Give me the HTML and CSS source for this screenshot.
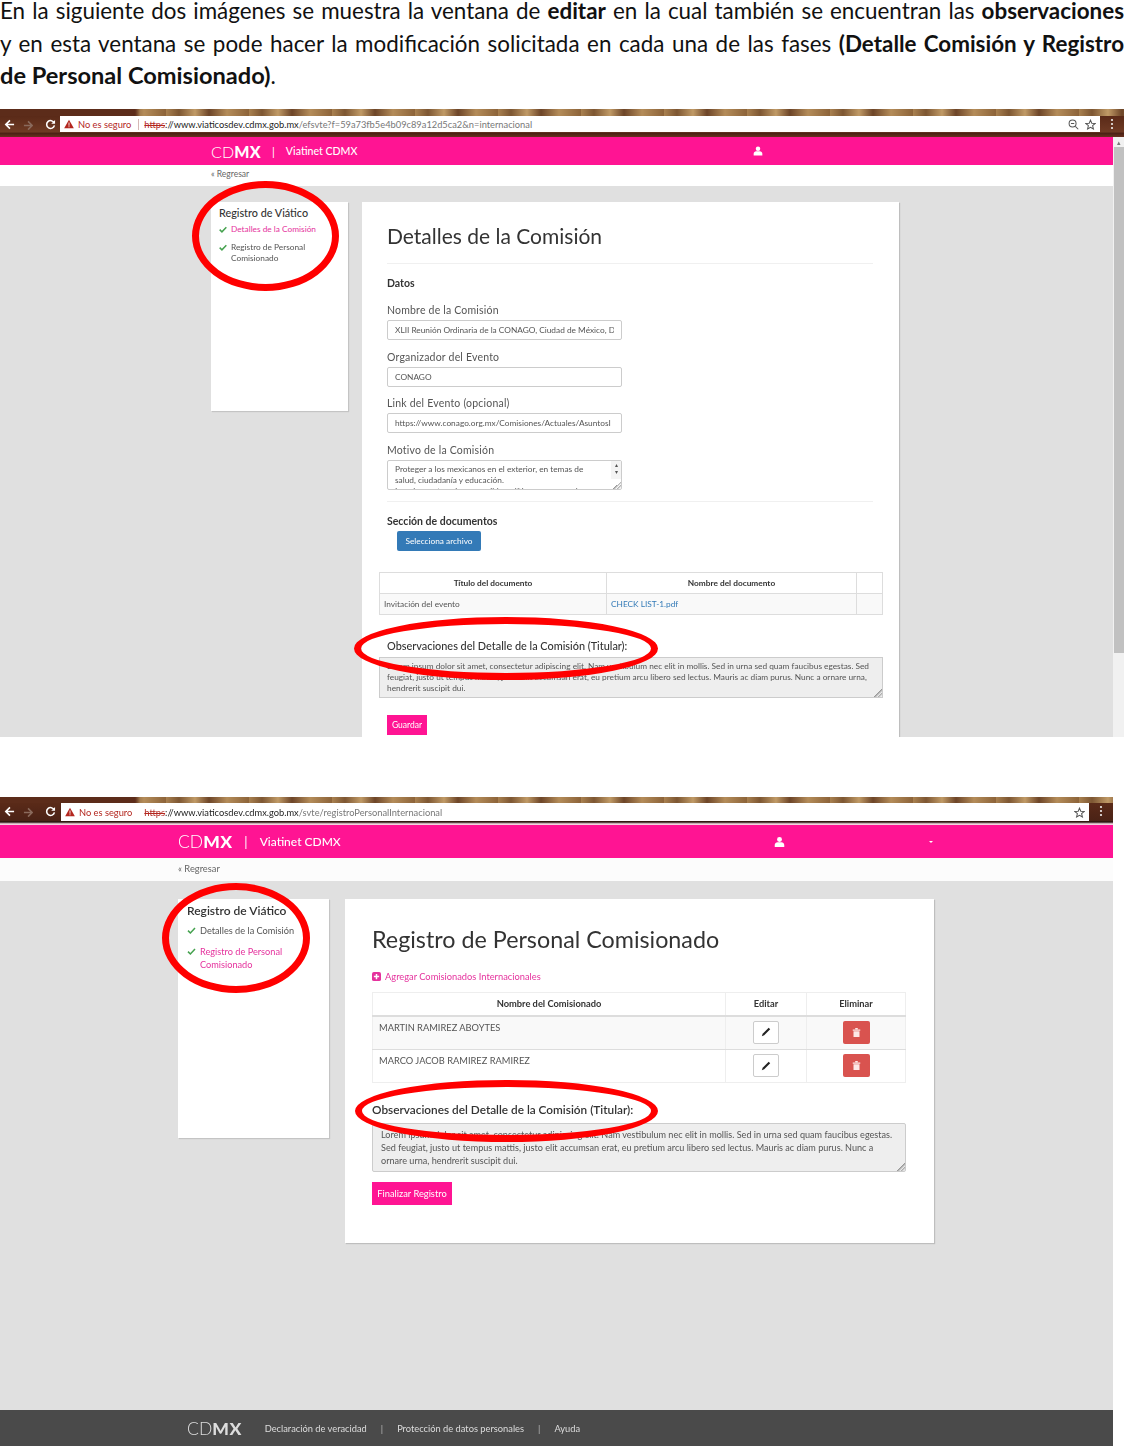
FILE: index.html
```html
<!DOCTYPE html>
<html lang="es">

<head>
    <meta charset="UTF-8">
    <title>Ventana de editar</title>
    <link rel="stylesheet" href="styles.css">
</head>

<body>
    <svg class="icon-defs" width="0" height="0">
        <symbol id="i-back" viewBox="0 0 12 12"><path d="M11 6H2.5M6.5 1.5 2 6l4.500 4.500" fill="none" stroke="currentColor" stroke-width="1.800"/></symbol>
        <symbol id="i-reload" viewBox="0 0 12 12"><path d="M10 4.200A4.300 4.300 0 1 0 10.300 7" fill="none" stroke="currentColor" stroke-width="1.700"/><path d="M11 1v4.200H6.800z" fill="currentColor"/></symbol>
        <symbol id="i-warn" viewBox="0 0 12 12"><path d="M6 .8 11.800 11H.2z" fill="currentColor"/><path d="M5.500 4.200h1v3.800h-1zM5.500 8.800h1v1h-1z" fill="#fff"/></symbol>
        <symbol id="i-zoom" viewBox="0 0 12 12"><circle cx="5" cy="5" r="3.800" fill="none" stroke="currentColor" stroke-width="1.100"/><path d="M3.200 5h3.600M8 8l3.200 3.200" fill="none" stroke="currentColor" stroke-width="1.100"/></symbol>
        <symbol id="i-star" viewBox="0 0 12 12"><path d="M6 1.200 7.400 4.600l3.700.3-2.800 2.400.9 3.600L6 9l-3.200 1.900.9-3.600L.9 4.900l3.700-.3z" fill="none" stroke="currentColor" stroke-width="1.100"/></symbol>
        <symbol id="i-kebab" viewBox="0 0 4 12"><circle cx="2" cy="2" r="1.100" fill="currentColor"/><circle cx="2" cy="6" r="1.100" fill="currentColor"/><circle cx="2" cy="10" r="1.100" fill="currentColor"/></symbol>
        <symbol id="i-user" viewBox="0 0 12 12"><circle cx="6" cy="3.300" r="2.700" fill="currentColor"/><path d="M.8 11.500V9.400c0-2 1.500-3.200 3-3.200h4.400c1.500 0 3 1.200 3 3.200v2.100z" fill="currentColor"/></symbol>
        <symbol id="i-check" viewBox="0 0 12 10"><path d="M1 5.200 4.400 8.500 11 1.500" fill="none" stroke="currentColor" stroke-width="2.200"/></symbol>
        <symbol id="i-pencil" viewBox="0 0 12 12"><path d="M9.200 1 11 2.800 3.800 10 1 11l1-2.800z" fill="currentColor"/></symbol>
        <symbol id="i-trash" viewBox="0 0 12 14"><path d="M1 3h10v1.500H1zM4.300 1h3.400v1.500H4.300zM2 5.200h8V13H2z" fill="currentColor"/></symbol>
        <symbol id="i-plus" viewBox="0 0 12 12"><rect width="12" height="12" rx="2.500" fill="currentColor"/><path d="M5 2.500h2V5h2.500v2H7v2.500H5V7H2.500V5H5z" fill="#fff"/></symbol>
    </svg>

    <p class="intro">
        <span class="line">En la siguiente dos imágenes se muestra la ventana de <b>editar</b> en la cual también se encuentran las <b>observaciones</b></span>
        <span class="line">y en esta ventana se pode hacer la modificación solicitada en cada una de las fases <b>(Detalle Comisión y Registro</b></span>
        <span class="line line-end"><b>de Personal Comisionado)</b>.</span>
    </p>

    <!-- primera captura -->
    <section class="shot shot-one">
        <div class="shot-body">
            <div class="wood"></div>
            <div class="toolbar">
                <svg class="nav-icon"><use href="#i-back" /></svg>
                <svg class="nav-icon nav-off"><use href="#i-back" transform="rotate(180 6 6)" /></svg>
                <svg class="nav-icon"><use href="#i-reload" /></svg>
                <div class="urlbar">
                    <svg class="warn"><use href="#i-warn" /></svg>
                    <span class="not-safe">No es seguro</span>
                    <span class="url"><s>https</s>://www.viaticosdev.cdmx.gob.mx<span class="url-rest">/efsvte?f=59a73fb5e4b09c89a12d5ca2&amp;n=internacional</span></span>
                    <svg class="url-icon"><use href="#i-zoom" /></svg>
                    <svg class="url-icon"><use href="#i-star" /></svg>
                </div>
                <svg class="kebab"><use href="#i-kebab" /></svg>
            </div>
            <div class="window">
                <div class="app">
                    <header class="topbar">
                        <span class="logo">CD<b>MX</b></span>
                        <span class="sep">|</span>
                        <span class="app-name">Viatinet CDMX</span>
                        <svg class="user"><use href="#i-user" /></svg>
                    </header>
                    <div class="backbar">« Regresar</div>
                    <div class="workspace">
                        <aside class="steps">
                            <h3>Registro de Viático</h3>
                            <div class="step step-on"><svg class="check"><use href="#i-check" /></svg><span>Detalles de la Comisión</span></div>
                            <div class="step"><svg class="check"><use href="#i-check" /></svg><span>Registro de Personal Comisionado</span></div>
                        </aside>
                        <main class="card">
                            <h2>Detalles de la Comisión</h2>
                            <hr class="rule-title">
                            <h4 class="datos">Datos</h4>
                            <div class="fields">
                                <div class="field">
                                    <label>Nombre de la Comisión</label>
                                    <div class="input"><span class="input-text">XLII Reunión Ordinaria de la CONAGO, Ciudad de México, D</span></div>
                                </div>
                                <div class="field">
                                    <label>Organizador del Evento</label>
                                    <div class="input"><span class="input-text">CONAGO</span></div>
                                </div>
                                <div class="field">
                                    <label>Link del Evento (opcional)</label>
                                    <div class="input"><span class="input-text">https://www.conago.org.mx/Comisiones/Actuales/AsuntosI</span></div>
                                </div>
                                <div class="field">
                                    <label>Motivo de la Comisión</label>
                                    <div class="input input-area">
                                        <div class="area-text">Proteger a los mexicanos en el exterior, en temas de salud, ciudadanía y educación.<br>Impulsar entre y hacer posible políticas para que el</div>
                                        <div class="area-scroll"><span>▴</span><span>▾</span></div>
                                    </div>
                                </div>
                            </div>
                            <hr class="rule-docs">
                            <h4 class="docs">Sección de documentos</h4>
                            <button class="btn-file">Selecciona archivo</button>
                            <table class="grid docs-grid">
                                <thead>
                                    <tr><th class="col-title">Título del documento</th><th class="col-file">Nombre del documento</th><th></th></tr>
                                </thead>
                                <tbody>
                                    <tr><td>Invitación del evento</td><td><a>CHECK LIST-1.pdf</a></td><td></td></tr>
                                </tbody>
                            </table>
                            <h4 class="obs-label">Observaciones del Detalle de la Comisión (Titular):</h4>
                            <div class="obs-box">Lorem ipsum dolor sit amet, consectetur adipiscing elit. Nam vestibulum nec elit in mollis. Sed in urna sed quam faucibus egestas. Sed feugiat, justo ut tempus mattis, justo elit accumsan erat, eu pretium arcu libero sed lectus. Mauris ac diam purus. Nunc a ornare urna, hendrerit suscipit dui.</div>
                            <button class="btn-pink">Guardar</button>
                        </main>
                    </div>
                </div>
                <div class="scrollbar"><span class="scroll-up">▴</span><span class="scroll-thumb"></span></div>
            </div>
        </div>
        <div class="ring ring-steps"></div>
        <div class="ring ring-obs"></div>
    </section>

    <!-- segunda captura -->
    <section class="shot shot-two">
        <div class="shot-body">
            <div class="wood"></div>
            <div class="toolbar">
                <svg class="nav-icon"><use href="#i-back" /></svg>
                <svg class="nav-icon nav-off"><use href="#i-back" transform="rotate(180 6 6)" /></svg>
                <svg class="nav-icon"><use href="#i-reload" /></svg>
                <div class="urlbar">
                    <svg class="warn"><use href="#i-warn" /></svg>
                    <span class="not-safe">No es seguro</span>
                    <span class="url"><s>https</s>://www.viaticosdev.cdmx.gob.mx<span class="url-rest">/svte/registroPersonalInternacional</span></span>
                    <svg class="url-icon"><use href="#i-star" /></svg>
                </div>
                <svg class="kebab"><use href="#i-kebab" /></svg>
            </div>
            <div class="app">
                <header class="topbar">
                    <span class="logo">CD<b>MX</b></span>
                    <span class="sep">|</span>
                    <span class="app-name">Viatinet CDMX</span>
                    <svg class="user"><use href="#i-user" /></svg>
                    <span class="caret"></span>
                </header>
                <div class="backbar">« Regresar</div>
                <div class="workspace">
                    <aside class="steps">
                        <h3>Registro de Viático</h3>
                        <div class="step"><svg class="check"><use href="#i-check" /></svg><span>Detalles de la Comisión</span></div>
                        <div class="step step-on"><svg class="check"><use href="#i-check" /></svg><span>Registro de Personal Comisionado</span></div>
                    </aside>
                    <main class="card">
                        <h2>Registro de Personal Comisionado</h2>
                        <a class="add-link"><svg class="plus"><use href="#i-plus" /></svg>Agregar Comisionados Internacionales</a>
                        <table class="grid people-grid">
                            <thead>
                                <tr><th>Nombre del Comisionado</th><th class="col-edit">Editar</th><th class="col-del">Eliminar</th></tr>
                            </thead>
                            <tbody>
                                <tr>
                                    <td>MARTIN RAMIREZ ABOYTES</td>
                                    <td class="cell-btn"><span class="btn-edit"><svg><use href="#i-pencil" /></svg></span></td>
                                    <td class="cell-btn"><span class="btn-del"><svg><use href="#i-trash" /></svg></span></td>
                                </tr>
                                <tr>
                                    <td>MARCO JACOB RAMIREZ RAMIREZ</td>
                                    <td class="cell-btn"><span class="btn-edit"><svg><use href="#i-pencil" /></svg></span></td>
                                    <td class="cell-btn"><span class="btn-del"><svg><use href="#i-trash" /></svg></span></td>
                                </tr>
                            </tbody>
                        </table>
                        <h4 class="obs-label">Observaciones del Detalle de la Comisión (Titular):</h4>
                        <div class="obs-box">Lorem ipsum dolor sit amet, consectetur adipiscing elit. Nam vestibulum nec elit in mollis. Sed in urna sed quam faucibus egestas. Sed feugiat, justo ut tempus mattis, justo elit accumsan erat, eu pretium arcu libero sed lectus. Mauris ac diam purus. Nunc a ornare urna, hendrerit suscipit dui.</div>
                        <button class="btn-pink">Finalizar Registro</button>
                    </main>
                </div>
                <footer class="footer">
                    <span class="logo">CD<b>MX</b></span>
                    <a>Declaración de veracidad</a>
                    <span class="foot-sep">|</span>
                    <a>Protección de datos personales</a>
                    <span class="foot-sep">|</span>
                    <a>Ayuda</a>
                </footer>
            </div>
        </div>
        <div class="ring ring-steps"></div>
        <div class="ring ring-obs"></div>
    </section>
</body>

</html>
```

FILE: styles.css
```css
html,
body {
    margin: 0;
    padding: 0;
    background: #fff;
}

body {
    width: 1124px;
    height: 1446px;
    overflow: hidden;
    font-family: Lato, "Open Sans", sans-serif;
    color: #333;
}

.icon-defs {
    display: block;
    height: 0;
}

.intro {
    margin: 0;
    height: 109px;
    font-size: 22.400px;
    line-height: 21px;
    color: #111;
}

.line {
    display: block;
    margin-bottom: 11.500px;
    white-space: nowrap;
    text-align: justify;
    text-align-last: justify;
}

.line-end {
    text-align-last: left;
}

.line-end b {
    font-size: 23.600px;
}

.shot {
    position: relative;
    overflow: hidden;
}

.shot-one {
    height: 628px;
    width: 1124px;
}

.shot-two {
    margin-top: 60px;
    height: 649px;
    width: 1113px;
}

.shot-body {
    height: 100%;
    display: flex;
    flex-direction: column;
}

.shot-one .shot-body {
    filter: blur(0.25px);
}

.shot-two .shot-body {
    filter: blur(0.7px);
}

/* barra del navegador */
.wood {
    height: 7px;
    flex: none;
    background:
        linear-gradient(90deg, #5c2c1a 0, #5c2c1a 135px, transparent 140px),
        repeating-linear-gradient(90deg, #a98150 0, #7d5632 13px, #c09a66 29px, #6d4528 43px, #b48c59 61px, #8c6339 83px);
}

.shot-two .wood {
    height: 6px;
}

.toolbar {
    height: 21px;
    flex: none;
    display: flex;
    align-items: flex-start;
    background: linear-gradient(#5a2a18 0, #6e3a24 76%, #4a2014 82%, #67311f 100%);
    color: #fff;
}

.shot-two .toolbar {
    height: 22px;
    background: linear-gradient(#5a2a18 0, #4a2216 82%, #1d0d08 86%, #f2d5de 95%);
}

.nav-icon {
    width: 11px;
    height: 11px;
    margin: 3px 8px 0 4px;
    flex: none;
}

.nav-off {
    color: #8a6a5c;
    margin-left: -1px;
}

.urlbar {
    width: 1040px;
    height: 16px;
    margin-left: -4px;
    padding: 0 4px;
    box-sizing: border-box;
    display: flex;
    align-items: center;
    background: #fff;
    font-size: 9.300px;
    white-space: nowrap;
}

.shot-two .urlbar {
    width: 1028px;
    height: 18px;
    margin-left: -3px;
}

.warn {
    width: 10px;
    height: 10px;
    margin-right: 4px;
    color: #b3261e;
    flex: none;
}

.not-safe {
    color: #b3261e;
    padding-right: 7px;
    margin-right: 5px;
    border-right: 1px solid #d5b7b5;
}

.shot-two .not-safe {
    border-right-color: transparent;
    padding-right: 6px;
}

.url {
    flex: 1;
    color: #222;
}

.url s {
    color: #b3261e;
}

.url-rest {
    color: #777;
}

.url-icon {
    width: 11px;
    height: 11px;
    margin-left: 6px;
    color: #555;
    flex: none;
}

.kebab {
    width: 4px;
    height: 12px;
    margin: 2px 0 0 10px;
    color: #eee;
    flex: none;
}

/* aplicacion */
.window {
    flex: 1;
    display: flex;
    min-height: 0;
    margin-top: 0;
}

.app {
    flex: 1;
    min-width: 0;
    min-height: 0;
    display: flex;
    flex-direction: column;
    background: #e0e0e0;
}

.scrollbar {
    width: 11px;
    flex: none;
    display: flex;
    flex-direction: column;
    background: #f1f1f1;
}

.scroll-up {
    height: 10px;
    font-size: 7px;
    line-height: 10px;
    text-align: center;
    color: #777;
}

.scroll-thumb {
    height: 506px;
    margin-left: 1px;
    background: #c1c1c1;
}

.topbar {
    height: 28px;
    flex: none;
    display: flex;
    align-items: center;
    padding-left: 211px;
    background: #ff1493;
    color: #fff;
}

.shot-two .topbar {
    height: 33px;
    padding-left: 178px;
}

.logo {
    font-size: 16px;
    font-weight: 300;
    letter-spacing: 0.1px;
}

.logo b {
    font-weight: 900;
    letter-spacing: 0.4px;
}

.shot-two .logo {
    font-size: 17.400px;
}

.sep {
    font-size: 11px;
    margin: 0 11px 0 11px;
}

.shot-two .sep {
    font-size: 13px;
    margin: 0 12px 0 12px;
}

.app-name {
    font-size: 10.600px;
    font-weight: 500;
}

.shot-two .app-name {
    font-size: 12px;
}

.user {
    width: 10px;
    height: 10px;
    margin-left: 396px;
    flex: none;
}

.shot-two .user {
    width: 11px;
    height: 12px;
    margin-left: 433px;
}

.caret {
    width: 0;
    height: 0;
    margin-left: 144px;
    border: 2px solid transparent;
    border-top-color: #fff;
    border-bottom: 0;
}

.backbar {
    height: 21px;
    flex: none;
    padding-left: 211px;
    box-sizing: border-box;
    background: #fff;
    font-size: 8.500px;
    line-height: 18px;
    color: #666;
}

.shot-two .backbar {
    height: 23px;
    padding-left: 178px;
    font-size: 9.300px;
    line-height: 21px;
    background: #fcfcfc;
}

.workspace {
    flex: 1;
    min-height: 0;
    display: flex;
    align-items: flex-start;
    gap: 14px;
    padding: 16px 0 0 211px;
}

.shot-two .workspace {
    gap: 16px;
    padding: 18px 0 0 178px;
}

.steps {
    width: 137px;
    height: 209px;
    flex: none;
    box-sizing: border-box;
    padding: 4px 8px;
    background: #fff;
    box-shadow: 1px 1px 1px rgba(0, 0, 0, 0.12);
}

.shot-two .steps {
    width: 151px;
    height: 239px;
    padding: 5px 9px;
}

.steps h3 {
    margin: 0 0 5px;
    font-size: 10.800px;
    line-height: 13px;
    font-weight: 500;
    color: #333;
}

.shot-two .steps h3 {
    margin-bottom: 6px;
    font-size: 12px;
    line-height: 14px;
    font-weight: 600;
}

.step {
    display: flex;
    gap: 4px;
    margin-bottom: 7px;
    font-size: 8.300px;
    line-height: 11px;
    color: #555;
}

.shot-two .step {
    gap: 4px;
    margin-bottom: 8px;
    font-size: 9.200px;
    line-height: 13px;
}

.step-on {
    color: #e5329d;
}

.check {
    width: 8px;
    height: 7px;
    margin-top: 2px;
    flex: none;
    color: #45a24f;
}

.shot-two .check {
    width: 9px;
    height: 7px;
    margin-top: 3px;
}

.card {
    width: 537px;
    flex: none;
    box-sizing: border-box;
    padding: 23px 26px 40px 25px;
    background: #fff;
    box-shadow: 1px 1px 1px rgba(0, 0, 0, 0.15);
}

.shot-two .card {
    width: 589px;
    padding: 26px 28px 38px 27px;
}

.card h2 {
    margin: 0;
    font-size: 21px;
    line-height: 22px;
    font-weight: 400;
    color: #333;
}

.shot-two .card h2 {
    font-size: 23.300px;
    line-height: 28px;
}

.rule-title,
.rule-docs {
    margin: 16px 0 0;
    border: 0;
    border-top: 1px solid #f0f0f0;
}

.card h4 {
    font-size: 10.500px;
    line-height: 14px;
    font-weight: 700;
    color: #333;
}

.datos {
    margin: 12px 0 0;
}

.fields {
    margin-top: 13px;
    display: flex;
    flex-direction: column;
    gap: 9.500px;
}

.field label {
    display: block;
    margin-bottom: 3px;
    font-size: 10.500px;
    line-height: 14px;
    letter-spacing: 0.2px;
    color: #555;
}

.input {
    width: 235px;
    height: 20px;
    box-sizing: border-box;
    padding: 0 7px;
    border: 1px solid #ccc;
    border-radius: 2px;
    font-size: 8.300px;
    line-height: 18px;
    color: #555;
}

.input-text {
    display: block;
    overflow: hidden;
    white-space: nowrap;
}

.input-area {
    height: 30px;
    display: flex;
    overflow: hidden;
    padding-right: 0;
    background: linear-gradient(135deg, transparent 50%, #999 50%, #fff 70%, #999 70%, #fff 90%) no-repeat right bottom / 8px 8px;
}

.area-text {
    flex: 1;
    padding: 3px 22px 0 0;
    line-height: 11px;
}

.area-scroll {
    width: 10px;
    flex: none;
    height: 18px;
    display: flex;
    flex-direction: column;
    font-size: 6px;
    line-height: 7px;
    text-align: center;
    color: #555;
    background: #f4f4f4;
}

.rule-docs {
    margin-top: 11px;
}

.docs {
    margin: 12px 0 0;
}

.btn-file {
    display: block;
    width: 84px;
    height: 20px;
    margin: 3px 0 0 10px;
    padding: 0;
    border: 0;
    border-radius: 2px;
    background: #337ab7;
    color: #fff;
    font-family: inherit;
    font-size: 8.300px;
}

.grid {
    border-collapse: collapse;
    table-layout: fixed;
    font-size: 8.300px;
    color: #555;
}

.grid th,
.grid td {
    box-sizing: border-box;
    padding: 0 4px;
    border: 1px solid #ddd;
}

.grid th {
    font-weight: 700;
    color: #333;
    text-align: center;
}

.grid tbody tr:nth-child(odd) td {
    background: #f9f9f9;
}

.docs-grid {
    width: 504px;
    margin: 21px 0 0 -8px;
}

.docs-grid th {
    height: 21px;
}

.docs-grid td {
    height: 21px;
}

.docs-grid a {
    color: #337ab7;
}

.col-title {
    width: 227px;
}

.col-file {
    width: 250px;
}

.obs-label {
    margin: 24px 0 0;
}

.card .obs-label {
    font-size: 10.900px;
    font-weight: 500;
}

.obs-box {
    width: 504px;
    height: 41px;
    margin: 4px 0 0 -8px;
    padding: 3px 7px;
    box-sizing: border-box;
    border: 1px solid #ccc;
    background: #eee linear-gradient(135deg, transparent 50%, #999 50%, #eee 70%, #999 70%, #eee 90%) no-repeat right bottom / 8px 8px;
    font-size: 8.300px;
    line-height: 11px;
    color: #555;
}

.btn-pink {
    display: block;
    width: 40px;
    height: 20px;
    margin-top: 17px;
    padding: 0;
    border: 0;
    background: #ff1493;
    color: #fff;
    font-family: inherit;
    font-size: 8.500px;
}

/* segunda captura */
.add-link {
    display: flex;
    align-items: center;
    gap: 4px;
    margin-top: 16px;
    height: 14px;
    font-size: 9.300px;
    color: #e5329d;
}

.plus {
    width: 9px;
    height: 9px;
    flex: none;
}

.people-grid {
    width: 534px;
    margin-top: 9px;
    font-size: 9.300px;
}

.people-grid th,
.people-grid td {
    border-left-color: #eee;
    border-right-color: #eee;
}

.people-grid thead tr {
    height: 23px;
}

.people-grid th {
    border-top-color: #eee;
    border-bottom: 2px solid #ddd;
}

.people-grid td {
    height: 33px;
    padding: 5px 6px 0;
    vertical-align: top;
    line-height: 12px;
}

.people-grid tbody tr:first-child td {
    height: 34px;
}

.people-grid tbody tr:last-child td {
    border-bottom-color: #eee;
}

.col-edit {
    width: 81px;
}

.col-del {
    width: 99px;
}

.people-grid .cell-btn {
    padding: 4px 0 0;
    text-align: center;
    line-height: 0;
}

.btn-edit,
.btn-del {
    display: inline-flex;
    vertical-align: top;
    align-items: center;
    justify-content: center;
    height: 23px;
    box-sizing: border-box;
    border-radius: 2px;
}

.btn-edit {
    width: 26px;
    border: 1px solid #ccc;
    background: #fff;
    color: #222;
}

.btn-edit svg {
    width: 10px;
    height: 10px;
}

.btn-del {
    width: 27px;
    background: #d9534f;
    color: #fde7e6;
}

.btn-del svg {
    width: 9px;
    height: 11px;
}

.shot-two .obs-label {
    margin: 19px 0 0;
    font-size: 11.800px;
    line-height: 16px;
    font-weight: 600;
}

.shot-two .obs-box {
    width: 534px;
    height: 49px;
    margin: 5px 0 0;
    padding: 4px 8px 0;
    border-radius: 2px;
    font-size: 9.100px;
    line-height: 13px;
}

.shot-two .btn-pink {
    width: 80px;
    height: 23px;
    margin-top: 10px;
    font-size: 9.300px;
}

.footer {
    height: 36px;
    flex: none;
    box-sizing: border-box;
    margin-top: auto;
    display: flex;
    align-items: center;
    padding: 1px 0 0 187px;
    background: #4a4a4a;
    color: #ddd;
    font-size: 9.300px;
}

.shot-two .footer .logo {
    margin-right: 23px;
    font-size: 17.500px;
}

.foot-sep {
    margin: 0 14px;
    color: #bbb;
}

/* circulos rojos encima de la captura */
.ring {
    position: absolute;
    box-sizing: border-box;
    border: 7px solid #f00;
    border-radius: 50%;
}

.shot-one .ring-steps {
    left: 192px;
    top: 72px;
    width: 147px;
    height: 110px;
}

.shot-one .ring-obs {
    left: 354px;
    top: 508px;
    width: 304px;
    height: 63px;
}

.shot-two .ring-steps {
    left: 162px;
    top: 86px;
    width: 148px;
    height: 110px;
}

.shot-two .ring-obs {
    left: 355px;
    top: 283px;
    width: 303px;
    height: 62px;
}
```
